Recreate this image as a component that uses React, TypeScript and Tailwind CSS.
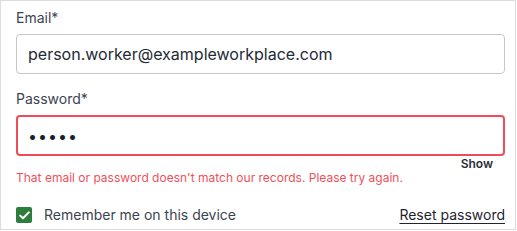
import React from 'react';

export default function App() {
  return (
    <div className="w-[516px] h-[230px] border border-[#dcdcdc] bg-white text-[#2d3440]" style={{ fontFamily: 'Inter, "Liberation Sans", sans-serif' }}>
      <div className="pl-[15px] pr-[10px] pt-[7px]">
        <label className="block text-[14px] leading-[20px] text-[#3c4350]">Email*</label>
        <div className="mt-[6px] h-[40px] rounded-[4px] border border-[#c6c6c6] flex items-center px-[11px] text-[16px] text-[#222a36]">
          person.worker@exampleworkplace.com
        </div>
        <label className="block mt-[15px] text-[14px] leading-[20px] text-[#3c4350]">Password*</label>
        <div className="mt-[6px] h-[41px] rounded-[4px] border-2 border-[#ee4c56] flex items-center px-[10px] text-[16px] tracking-[1px] text-[#1a1f2a]">
          •••••
        </div>
        <div className="flex justify-end pr-[12px] mt-[1px]">
          <span className="text-[12px] leading-[14px] font-semibold text-[#2a2f3a]">Show</span>
        </div>
        <p className="text-[12px] leading-[14px] text-[#f0505a]">
          That email or password doesn't match our records. Please try again.
        </p>
        <div className="mt-[20px] flex items-center justify-between">
          <div className="flex items-center gap-[12px]">
            <span className="w-[16px] h-[16px] rounded-[2px] bg-[#2e7d3c] flex items-center justify-center">
              <svg width="11" height="9" viewBox="0 0 11 9" fill="none">
                <path d="M1.2 4.6 L4 7.3 L9.8 1.4" stroke="white" strokeWidth="2" strokeLinecap="round" strokeLinejoin="round" />
              </svg>
            </span>
            <span className="text-[14px] leading-[20px] text-[#3c4350]">Remember me on this device</span>
          </div>
          <a className="text-[14px] leading-[20px] text-[#1f2430] underline underline-offset-[3px]">Reset password</a>
        </div>
      </div>
    </div>
  );
}
